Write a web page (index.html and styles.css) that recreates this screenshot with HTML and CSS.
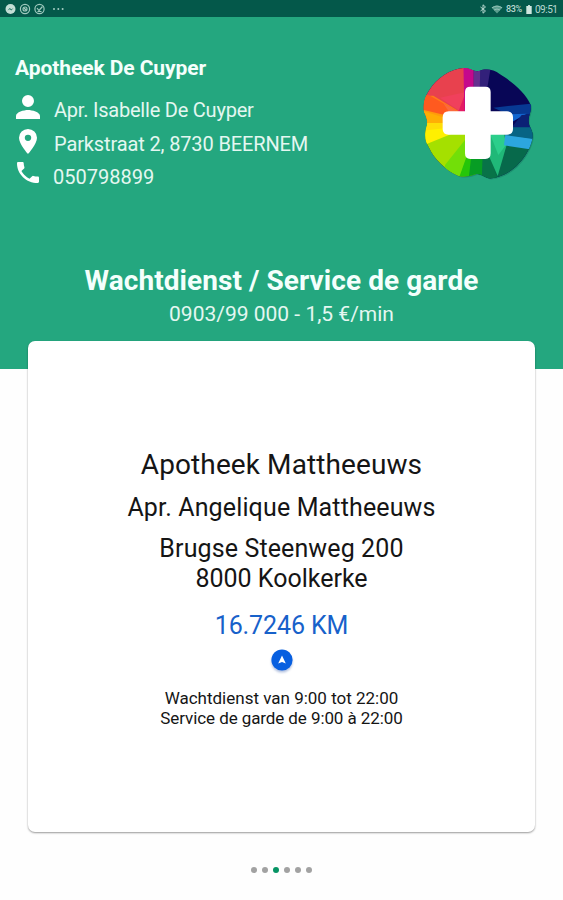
FILE: index.html
```html
<!DOCTYPE html>
<html lang="nl">
<head>
<meta charset="utf-8">
<title>Apotheek De Cuyper</title>
<link rel="stylesheet" href="styles.css">
</head>
<body>
<div class="status">
  <svg class="status-left" viewBox="0 0 70 17">
    <g fill="#c3ded6"><circle cx="10.500" cy="9" r="5"/></g>
    <path d="M7.500 10.500l2.200-2.500 1.700 1.300 2.200-1.300-2.300 2.600-1.600-1.300z" fill="#28796a"/>
    <g fill="none" stroke="#9fc9be" stroke-width="1.200"><circle cx="25" cy="9" r="4.600"/><circle cx="25" cy="9" r="2"/><path d="M23.500 7.500l3 3"/><circle cx="39.500" cy="9" r="4.600"/><path d="M37 8l2 2.500 3.500-4M37.500 11.500h4"/></g>
    <g fill="#a5cec3"><circle cx="54" cy="9" r="1"/><circle cx="58.300" cy="9" r="1"/><circle cx="62.600" cy="9" r="1"/></g>
  </svg>
  <div class="status-right">
    <svg class="bluetooth" viewBox="0 0 8 10"><path d="M1.500 3l5 4L4 9.200V.8L6.500 3l-5 4" fill="none" stroke="#b4d6cd"/></svg>
    <svg class="wifi" viewBox="0 0 12 9"><path d="M.5 2.500Q6-1.300 11.500 2.500L6 8.500z" fill="#5b9e8e"/><path d="M1 2.800Q6-.6 11 2.800M3 5Q6 3 9 5" fill="none" stroke="#91bfb4"/></svg>
    <span class="percent">83%</span>
    <svg class="battery" viewBox="0 0 6 10"><path d="M2 0h2v1h2v9H0V1h2z" fill="#d0e6df"/></svg>
    <span class="clock">09:51</span>
  </div>
</div>
<header class="header">
  <div class="contact">
    <h1 class="name">Apotheek De Cuyper</h1>
    <div class="row"><svg class="person" viewBox="4 4 16 16" preserveAspectRatio="none"><path d="M12 12a4 4 0 1 0 0-8 4 4 0 0 0 0 8zm0 2c-2.670 0-8 1.340-8 4v2h16v-2c0-2.660-5.330-4-8-4z"/></svg><span class="t-person">Apr. Isabelle De Cuyper</span></div>
    <div class="row"><svg class="pin" viewBox="5 2 14 20" preserveAspectRatio="none"><path d="M12 2a7 7 0 0 0-7 7c0 5.250 7 13 7 13s7-7.750 7-13a7 7 0 0 0-7-7zm0 9.500a2.500 2.500 0 1 1 0-5 2.500 2.500 0 0 1 0 5z"/></svg><span class="t-address">Parkstraat 2, 8730 BEERNEM</span></div>
    <div class="row"><svg class="phone" viewBox="3 3 18 18" preserveAspectRatio="none"><path d="M20 15.500c-1.250 0-2.450-.2-3.570-.57a1.020 1.020 0 0 0-1.020.24l-2.200 2.200a15.050 15.050 0 0 1-6.590-6.580l2.200-2.210c.28-.27.360-.66.250-1.010A11.360 11.360 0 0 1 8.500 4c0-.55-.45-1-1-1H4c-.55 0-1 .45-1 1 0 9.390 7.610 17 17 17 .55 0 1-.45 1-1v-3.500c0-.55-.45-1-1-1z"/></svg><span class="t-phone">050798899</span></div>
  </div>
  <svg class="logo" viewBox="36 33 336 345">
    <defs><clipPath id="blob"><path d="M160 39C178 37 190 51 208 48C225 41 250 42 270 58C300 76 347 112 362 150C366 170 354 180 356 200C356 215 369 225 368 245C365 270 350 300 327 325C305 352 270 366 245 370C225 372 215 352 195 358C175 365 155 368 140 360C110 348 70 310 58 280C45 260 42 240 50 215C55 200 50 185 42 170C38 145 45 125 58 105C80 70 120 42 160 39Z"/></clipPath></defs>
    <path d="M160 39C178 37 190 51 208 48C225 41 250 42 270 58C300 76 347 112 362 150C366 170 354 180 356 200C356 215 369 225 368 245C365 270 350 300 327 325C305 352 270 366 245 370C225 372 215 352 195 358C175 365 155 368 140 360C110 348 70 310 58 280C45 260 42 240 50 215C55 200 50 185 42 170C38 145 45 125 58 105C80 70 120 42 160 39Z" transform="translate(3 3)" fill="#167a60" opacity=".5"/>
    <g clip-path="url(#blob)">
      <path d="M30 30H380V380H30z" fill="#080656"/>
      <path d="M30 20H190V205H30z" fill="#e8414e"/>
      <path d="M30 122L70 122 205 205H30z" fill="#ff7a1c"/>
      <path d="M30 205H205V380H30z" fill="#a5e000"/>
      <path d="M205 225H380V380H205z" fill="#07694b"/>
      <path d="M205 205L90 128 164 112z" fill="#f0405c"/>
      <path d="M205 205L145 170 164 120z" fill="#e51c62"/>
      <path d="M160 20H191V205H164z" fill="#c5088c"/>
      <path d="M191 20H212V205H191z" fill="#65308f"/>
      <path d="M212 20H245L230 110 205 205z" fill="#32207a"/>
      <path d="M205 205L30 165V115L60 122z" fill="#ff5a1f"/>
      <path d="M60 122L100 145 120 175 205 205z" fill="#fb6a3c"/>
      <path d="M205 205H30V162z" fill="#ff9b0b"/>
      <path d="M30 165L104 188V205H30z" fill="#ffae05"/>
      <path d="M30 204H205L30 275z" fill="#fff000"/>
      <path d="M30 204H110V219L50 226H30z" fill="#ffdd08"/>
      <path d="M205 205L105 330V380H147z" fill="#72df08"/>
      <path d="M205 205L143 380H190L205 350z" fill="#25c609"/>
      <path d="M190 250H220L218 380H175z" fill="#079d24"/>
      <path d="M220 250L215 380H265L235 285z" fill="#087348"/>
      <path d="M240 238L290 270 263 363 232 292z" fill="#20b878"/>
      <path d="M240 236L283 238 288 270 265 300z" fill="#2cce8b"/>
      <path d="M286 238L380 252V286L282 271z" fill="#2ca6df"/>
      <path d="M300 213L380 213V254L286 240z" fill="#076484"/>
      <path d="M250 158L380 144V178L300 180z" fill="#073993"/>
      <path d="M300 178L350 176 307 200z" fill="#1265cf"/>
      <path d="M335 180L380 178V217H305z" fill="#0b2175"/>
    </g>
    <path d="M181 95H226Q242 95 242 111V169H291Q309 169 309 187V222Q309 239 291 239H242V295Q242 312 226 312H181Q165 312 165 295V239H116Q98 239 98 222V187Q98 169 116 169H165V111Q165 95 181 95Z" fill="#fff"/>
  </svg>
  <div class="service">
    <h2 class="service-title">Wachtdienst / Service de garde</h2>
    <div class="service-price">0903/99 000 - 1,5 €/min</div>
  </div>
</header>
<main class="card">
  <div class="pharmacy">Apotheek Mattheeuws</div>
  <div class="pharmacist">Apr. Angelique Mattheeuws</div>
  <div class="address"><div class="street">Brugse Steenweg 200</div><div>8000 Koolkerke</div></div>
  <div class="distance">16.7246 KM</div>
  <svg class="navigate" viewBox="0 0 22 22"><circle cx="11" cy="11" r="10.600" fill="#075fe0"/><path d="M11 6.500L14.800 14.500 11 13 7.200 14.500z" fill="#fff"/></svg>
  <div class="hours"><div class="hours-nl">Wachtdienst van 9:00 tot 22:00</div><div class="hours-fr">Service de garde de 9:00 à 22:00</div></div>
</main>
<nav class="dots"><i></i><i></i><i class="active"></i><i></i><i></i><i></i></nav>
</body>
</html>
```
FILE: styles.css
```css
* { box-sizing: border-box; }
body {
  margin: 0;
  height: 900px;
  overflow: hidden;
  background: #fefefe;
  color: #151515;
  font-family: Roboto, "Liberation Sans", sans-serif;
  white-space: nowrap;
}
h1, h2 { margin: 0; }
svg { display: block; flex: none; }
.status {
  height: 17px;
  background: #04584a;
  display: flex;
  justify-content: space-between;
}
.status-left { width: 70px; height: 17px; }
.status-right {
  display: flex;
  align-items: center;
  padding: 1px 5px 0 0;
  color: #b9d9d1;
  font-size: 9px;
}
.bluetooth { width: 8px; height: 10px; margin-right: 4px; }
.wifi { width: 12px; height: 9px; margin-right: 3px; }
.percent { width: 20px; letter-spacing: -.4px; font-weight: 500; }
.battery { width: 6px; height: 9px; margin-right: 3px; }
.clock { width: 23px; font-size: 10px; letter-spacing: -.5px; }
.header {
  height: 352px;
  background: #24a77f;
  color: #f4fffc;
  display: grid;
  grid-template-columns: 1fr 112px;
  grid-template-rows: 245px 1fr;
  padding: 0 29px 0 15px;
}
.contact { padding-top: 36px; }
.name { font-size: 21px; line-height: 30px; height: 39px; font-weight: 700; letter-spacing: -.08px; }
.row {
  height: 33.500px;
  display: flex;
  align-items: flex-start;
  font-size: 20px;
  line-height: 36.500px;
  color: #e4f7f1;
}
.row svg { fill: #fff; }
.person { width: 24px; height: 24px; margin: 3px 14px 0 1px; }
.pin { width: 18px; height: 25px; margin: 3px 17px 0 4px; }
.phone { width: 22px; height: 21px; margin: 3px 14px 0 2px; }
.t-person { letter-spacing: -.22px; }
.t-address { letter-spacing: -.13px; }
.logo { width: 112px; height: 115px; margin-top: 49px; }
.service { grid-column: 1 / 3; margin-right: -14px; text-align: center; }
.service-title { font-size: 28px; line-height: 37px; font-weight: 700; letter-spacing: .07px; }
.service-price { font-size: 21px; line-height: 30px; color: #e4f7f1; }
.card {
  width: 507px;
  height: 491px;
  margin: -28px 0 0 28px;
  padding-top: 105px;
  background: #fff;
  border-radius: 7px;
  box-shadow: 0 1px 2px rgba(0, 0, 0, .4);
  display: flex;
  flex-direction: column;
  align-items: center;
  position: relative;
}
.pharmacy { font-size: 28px; line-height: 37px; height: 43px; letter-spacing: .1px; }
.pharmacist { font-size: 25px; line-height: 37px; height: 42px; letter-spacing: .14px; }
.address { font-size: 25px; line-height: 30px; height: 76px; text-align: center; padding-top: 3px; }
.street { letter-spacing: .12px; }
.distance { font-size: 25px; line-height: 38px; height: 42px; letter-spacing: -.1px; color: #1761ca; }
.navigate { width: 22px; height: 22px; filter: drop-shadow(0 2px 1px rgba(0, 50, 150, .3)); }
.hours { font-size: 17px; line-height: 20px; padding-top: 17px; text-align: center; }
.hours-fr { letter-spacing: -.09px; }
.dots { display: flex; gap: 5.200px; justify-content: center; padding-top: 35px; }
.dots i { width: 6px; height: 6px; border-radius: 50%; background: #a2a2a2; }
.dots .active { background: #079464; }
```
